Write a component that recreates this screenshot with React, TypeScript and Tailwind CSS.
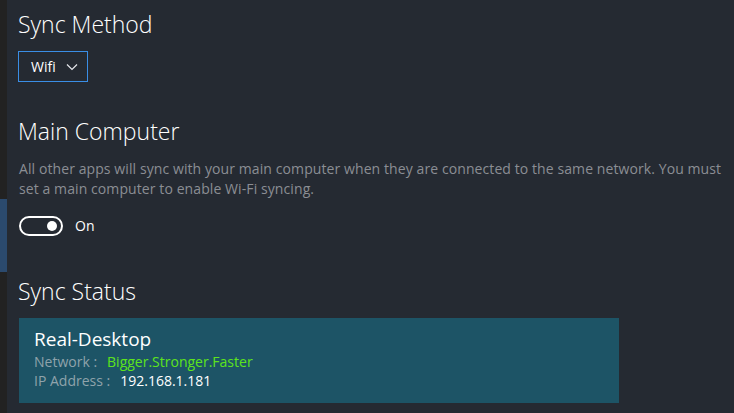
import { useState } from 'react'

function Chevron() {
  return (
    <svg width="12" height="8" viewBox="0 0 12 8" fill="none" className="text-gray-200">
      <path d="M1 1.5L6 6.5L11 1.5" stroke="currentColor" strokeWidth="1.2" />
    </svg>
  )
}

export default function App() {
  const [on, setOn] = useState(true)

  return (
    <div
      className="flex h-[413px] w-[734px] overflow-hidden bg-[#252a32] text-white"
      style={{ fontFamily: '"Open Sans", "Noto Sans", sans-serif' }}
    >
      {/* left rail */}
      <div className="flex w-[7px] flex-col bg-[#222222]">
        <div className="h-[199px]" />
        <div className="h-[73px] bg-[#2b4a6e]" />
      </div>

      <div className="flex flex-1 flex-col pl-[11px]">
        <h2 className="mt-[8px] text-[23px] font-light leading-[32px]">Sync Method</h2>
        <button className="mt-[11px] flex h-[31px] w-[70px] items-center gap-[10px] border border-[#3a8ee6] pl-[12px] text-[14px]">
          <span>Wifi</span>
          <Chevron />
        </button>

        <h2 className="mt-[33px] text-[23px] font-light leading-[32px]">Main Computer</h2>
        <p className="mt-[12px] whitespace-nowrap pl-[1px] text-[14px] leading-[20px] tracking-[0.09px] text-[#8b8e94]">
          All other apps will sync with your main computer when they are connected to the same network. You must
          <br />
          set a main computer to enable Wi-Fi syncing.
        </p>
        <div className="mt-[16px] flex items-center gap-[12px] pl-[1px]">
          <button
            onClick={() => setOn(!on)}
            className="flex h-[20px] w-[44px] items-center justify-end rounded-full border-2 border-white px-[4px]"
          >
            <span className="h-[10px] w-[10px] rounded-full bg-white" />
          </button>
          <span className="text-[14px]">{on ? 'On' : 'Off'}</span>
        </div>

        <h2 className="mt-[39px] text-[23px] font-light leading-[32px]">Sync Status</h2>
        <div className="mt-[11px] ml-[1px] flex h-[85px] w-[600px] flex-col bg-[#1d5466] px-[15px] pt-[8px]">
          <p className="text-[19px] leading-[26px]">Real-Desktop</p>
          <div className="flex gap-[10px] text-[14px] leading-[19px]">
            <span className="text-[#8fa3ab]">Network :</span>
            <span className="text-[#5de41c]">Bigger.Stronger.Faster</span>
          </div>
          <div className="flex gap-[10px] text-[14px] leading-[19px]">
            <span className="text-[#8fa3ab]">IP Address :</span>
            <span>192.168.1.181</span>
          </div>
        </div>
      </div>
    </div>
  )
}
